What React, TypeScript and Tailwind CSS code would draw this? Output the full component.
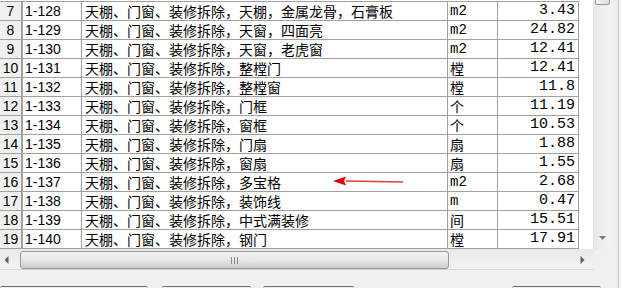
import React from "react";

interface Row {
  no: number;
  code: string;
  name: string;
  unit: string;
  price: string;
}

const prefix = "天棚、门窗、装修拆除，";

const rows: Row[] = [
  { no: 7, code: "1-128", name: prefix + "天棚，金属龙骨，石膏板", unit: "m2", price: "3.43" },
  { no: 8, code: "1-129", name: prefix + "天窗，四面亮", unit: "m2", price: "24.82" },
  { no: 9, code: "1-130", name: prefix + "天窗，老虎窗", unit: "m2", price: "12.41" },
  { no: 10, code: "1-131", name: prefix + "整樘门", unit: "樘", price: "12.41" },
  { no: 11, code: "1-132", name: prefix + "整樘窗", unit: "樘", price: "11.8" },
  { no: 12, code: "1-133", name: prefix + "门框", unit: "个", price: "11.19" },
  { no: 13, code: "1-134", name: prefix + "窗框", unit: "个", price: "10.53" },
  { no: 14, code: "1-135", name: prefix + "门扇", unit: "扇", price: "1.88" },
  { no: 15, code: "1-136", name: prefix + "窗扇", unit: "扇", price: "1.55" },
  { no: 16, code: "1-137", name: prefix + "多宝格", unit: "m2", price: "2.68" },
  { no: 17, code: "1-138", name: prefix + "装饰线", unit: "m", price: "0.47" },
  { no: 18, code: "1-139", name: prefix + "中式满装修", unit: "间", price: "15.51" },
  { no: 19, code: "1-140", name: prefix + "钢门", unit: "樘", price: "17.91" },
];

const sans = "font-['Liberation_Sans','Noto_Sans_CJK_SC',sans-serif]";
const cjk = "font-['Noto_Sans_CJK_SC',sans-serif]";
const mono = "font-['Liberation_Mono','Noto_Sans_CJK_SC',monospace]";

function TableRow({ row }: { row: Row }) {
  const isAscii = /^[a-z0-9]+$/i.test(row.unit);
  return (
    <div className="flex h-[19px] border-b border-[#a0a0a0] text-[14px] leading-[18px] text-black">
      <div className={`w-[23px] shrink-0 border-r-2 border-[#a0a0a0] bg-[#f0f0f0] text-center ${sans}`}>
        {row.no}
      </div>
      <div className={`w-[59px] shrink-0 border-r border-[#a0a0a0] pl-[2px] ${sans}`}>{row.code}</div>
      <div className={`w-[366px] shrink-0 overflow-hidden whitespace-nowrap border-r border-[#a0a0a0] pl-[3px] ${cjk}`}>
        {row.name}
      </div>
      <div className={`w-[50px] shrink-0 border-r border-[#a0a0a0] pl-[2px] ${isAscii ? mono : cjk}`}>
        {row.unit}
      </div>
      <div className={`w-[81px] shrink-0 border-r border-[#a0a0a0] pr-[3px] text-right text-[15px] ${mono}`}>
        {row.price}
      </div>
    </div>
  );
}

function VScrollbar() {
  return (
    <div className="relative w-[18px] shrink-0 border-l border-[#e3e3e3] bg-gradient-to-r from-[#e8e8e8] to-[#f2f2f2]">
      <div className="absolute left-[1px] right-[1px] top-[-8px] h-[13px] rounded-b-[2px] border border-[#979797] bg-gradient-to-r from-[#f4f4f4] to-[#dcdcdc]" />
      <svg className="absolute left-[4px] top-[235px]" width="9" height="6" viewBox="0 0 9 6">
        <path d="M1 1 L8 1 L4.5 5 Z" fill="#7a7a7a" />
      </svg>
    </div>
  );
}

function HScrollbar() {
  return (
    <div className="flex h-[21px] shrink-0">
      <div className="relative flex w-[593px] items-center border-b border-[#d5d5d5] bg-gradient-to-b from-[#e9e9e9] to-[#f3f3f3]">
        <svg className="absolute left-[4px] top-[7px]" width="5" height="8" viewBox="0 0 5 8">
          <path d="M4.5 0 L4.5 8 L0.5 4 Z" fill="#606060" />
        </svg>
        <div className="absolute left-[20px] top-[2px] flex h-[18px] w-[429px] items-center justify-center rounded-[3px] border border-[#979797] bg-gradient-to-b from-[#f4f4f4] via-[#e6e6e6] to-[#cfcfcf]">
          <div className="flex gap-[2px]">
            <span className="h-[7px] w-[1px] bg-[#8a8a8a]" />
            <span className="h-[7px] w-[1px] bg-[#8a8a8a]" />
            <span className="h-[7px] w-[1px] bg-[#8a8a8a]" />
          </div>
        </div>
        <svg className="absolute left-[580px] top-[7px]" width="5" height="8" viewBox="0 0 5 8">
          <path d="M0.5 0 L0.5 8 L4.5 4 Z" fill="#606060" />
        </svg>
      </div>
      <div className="w-[18px] bg-[#f0f0f0]" />
    </div>
  );
}

export default function App() {
  return (
    <div className="relative flex h-[288px] w-[621px] overflow-hidden bg-[#f0f0f0]">
      <div className="flex w-[619px] flex-col border-r border-[#b9c1c9]">
        <div className="flex h-[249px] shrink-0">
          <div className="w-[593px] shrink-0 bg-white pt-[1px]">
            <div className="w-[579px] border-t border-[#a0a0a0]">
              {rows.map((r) => (
                <TableRow key={r.no} row={r} />
              ))}
            </div>
          </div>
          <VScrollbar />
        </div>
        <HScrollbar />
        <div className="flex flex-1 items-end gap-[12px] pb-0">
          <div className="flex items-end">
            <div className="h-[2px] w-[148px] rounded-t-[3px] border-t border-[#707070]" />
            <div className="ml-[14px] h-[2px] w-[89px] rounded-t-[3px] border-t border-[#707070]" />
            <div className="ml-[12px] h-[2px] w-[91px] rounded-t-[3px] border-t border-[#707070]" />
            <div className="ml-[158px] h-[2px] w-[89px] rounded-t-[3px] border-t border-[#707070]" />
          </div>
        </div>
      </div>
      <div className="w-[1px] bg-white" />

      <svg className="pointer-events-none absolute left-[332px] top-[175px]" width="74" height="12" viewBox="0 0 74 12">
        <path d="M14 6 L71 7" stroke="#e23a3a" strokeWidth="1.4" />
        <path d="M1 6 L14 1.5 L12 6 L14 10.5 Z" fill="#e00000" />
      </svg>
    </div>
  );
}
